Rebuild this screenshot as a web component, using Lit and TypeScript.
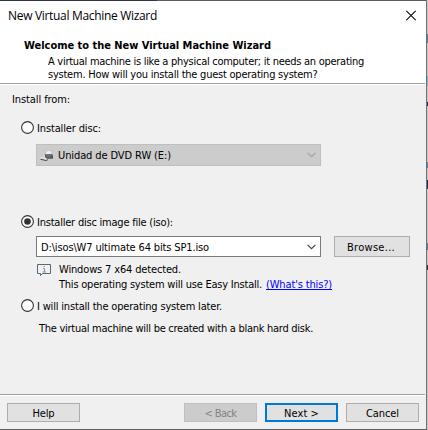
import { LitElement, html, css, svg } from "lit";
import { customElement, property, state } from "lit/decorators.js";
import { styleMap } from "lit/directives/style-map.js";

/** One line of text whose tracking is adjusted so that it fills a given width. */
@customElement("wizard-text")
class WizardText extends LitElement {
  @property() text = "";
  @property({ type: Number }) span = 0;
  @state() private tracking = 0;
  static styles = css`
    :host { display: block; height: 14px; line-height: 16px; white-space: pre; flex: none; }
    .line { display: inline-block; }
  `;
  firstUpdated() {
    const el = this.renderRoot.querySelector(".line") as HTMLElement;
    const natural = el.getBoundingClientRect().width;
    if (this.span && natural) this.tracking = (this.span - natural) / this.text.length;
  }
  render() {
    return html`<span class="line" style=${styleMap({ letterSpacing: this.tracking + "px" })}>${this.text}</span>`;
  }
}

@customElement("wizard-radio")
class WizardRadio extends LitElement {
  @property({ type: Boolean }) checked = false;
  @property() text = "";
  @property({ type: Number }) span = 0;
  static styles = css`
    :host { display: flex; height: 14px; padding-left: 21px; gap: 3px; align-items: flex-start; }
    svg { display: block; flex: none; }
  `;
  render() {
    return html`<svg width="13" height="13" viewBox="0 0 13 13">
        <circle cx="6.5" cy="6.5" r="5.9" fill="#fff" stroke="#333" stroke-width="1.1" />
        ${this.checked ? svg`<circle cx="6.5" cy="6.5" r="3.3" fill="#333" />` : ""}
      </svg>
      <wizard-text .text=${this.text} .span=${this.span}></wizard-text>`;
  }
}

@customElement("app-root")
class AppRoot extends LitElement {
  static styles = css`
    :host {
      display: flex; width: 428px; height: 430px; overflow: hidden; box-sizing: border-box;
      font: 11px "DejaVu Sans Condensed", "DejaVu Sans", sans-serif; font-stretch: condensed;
      color: #000;
    }
    * { box-sizing: border-box; }
    svg { display: block; flex: none; }
    .dialog {
      width: 427px; height: 430px; background: #f0f0f0; display: flex; flex-direction: column;
      border-right: 1px solid #707070; border-bottom: 1px solid #606060;
    }
    .edge { height: 1px; flex: none; background: linear-gradient(90deg, #2d3448 157px, #5c5c5c 157px); }
    .behind { width: 1px; display: flex; flex-direction: column; background: #c9c9c9; }
    .behind i { display: block; height: 9px; background: #4b7fa8; }
    .behind .b1 { margin-top: 34px; }
    .behind .b2 { margin-top: 33px; background: #6fb1d8; height: 10px; }
    .behind .b3 { margin-top: 16px; background: #24345c; height: 4px; }
    .behind .b4 { margin-top: 56px; height: 6px; }
    .behind .b5 { margin-top: 12px; background: #25305e; }
    .behind .b6 { margin-top: 54px; height: 7px; }
    .behind .b7 { margin-top: 15px; height: 5px; background: #333; }
    .head { height: 82px; flex: none; background: #fff; }
    .title {
      height: 28px; padding: 7px 10px 0 8px; display: flex; justify-content: space-between;
      font: 12px "Open Sans", "Noto Sans", sans-serif;
    }
    .title svg { margin-top: 2px; }
    .welcome { margin: 9px 0 0 24px; font-weight: bold; }
    .desc { margin-left: 48px; }
    .desc.first { margin-top: 2px; }
    .desc.second { margin-top: -1px; }
    .rule { height: 2px; flex: none; width: 425px; background: #fff; border-top: 1px solid #a0a0a0; }
    .body { height: 309px; flex: none; }
    .from { margin: 7px 0 15px 12px; }
    .combo { width: 285px; display: flex; align-items: center; border: 1px solid #7a7a7a; background: #fff; padding: 0 4px; flex: none; }
    .combo .arrow { margin-left: auto; }
    .combo.disabled { margin: 9px 0 49px 36px; height: 22px; background: #ccc; border-color: #bfbfbf; padding-left: 3px; }
    .drive { margin: 1px 4px 0 0; }
    .pick { display: flex; gap: 13px; margin: 7px 0 5px 36px; }
    .pick .combo { height: 21px; }
    .button {
      height: 19px; width: 73px; display: flex; align-items: center; justify-content: center;
      background: #e1e1e1; border: 1px solid #adadad; color: #000;
    }
    .button.browse { width: 76px; height: 21px; padding-right: 2px; padding-top: 1px; }
    .note { display: flex; padding-left: 37px; gap: 8px; height: 37px; }
    .note svg { margin-top: 2px; }
    .message { display: flex; margin-top: 1px; gap: 4px; }
    .link { color: #00f; border-bottom: 1px solid #00f; height: 13px; }
    .later { margin: 8px 0 0 39px; }
    .foot { flex: 1; display: flex; padding: 7px 7px 0; gap: 8px; }
    .help { margin-right: auto; }
    .off { background: #ccc; border-color: #bfbfbf; color: #838383; }
    .main { border: 2px solid #0078d7; }
  `;

  private text(text: string, span: number, cls = "") {
    return html`<wizard-text class=${cls} .text=${text} .span=${span}></wizard-text>`;
  }

  private arrow(color: string) {
    return html`<svg class="arrow" width="9" height="6" viewBox="0 0 9 6">
      <path d="M.6.8 4.5 4.7 8.4.8" fill="none" stroke=${color} stroke-width="1.2" /></svg>`;
  }

  render() {
    return html`
      <div class="dialog">
        <div class="edge"></div>
        <div class="head">
          <div class="title">
            ${this.text("New Virtual Machine Wizard", 149)}
            <svg width="10" height="11" viewBox="0 0 10 11">
              <path d="M.3.8 9.7 10.2M9.7.8.3 10.2" stroke="#000" stroke-width="1.1" />
            </svg>
          </div>
          ${this.text("Welcome to the New Virtual Machine Wizard", 247, "welcome")}
          ${this.text("A virtual machine is like a physical computer; it needs an operating", 316, "desc first")}
          ${this.text("system. How will you install the guest operating system?", 269.5, "desc second")}
        </div>
        <div class="rule"></div>
        <div class="body">
          ${this.text("Install from:", 58, "from")}
          <wizard-radio .text=${"Installer disc:"} .span=${64}></wizard-radio>
          <div class="combo disabled">
            <svg class="drive" width="14" height="12" viewBox="0 0 14 12">
              <path d="M5 5 6 1.5 8.5.3 11 .8 12.5 4Z" fill="#eee" stroke="#aaa" stroke-width=".5" />
              <path d="M0 7.5 5 6 8 8 6 10.2 0 9Z" fill="#ddd" />
              <path d="M.5 8.8 6 10 8 9.2V10L6 10.9.5 9.8Z" fill="#444" />
              <path d="M5 4.2h7l1 1v3.6H7L5 7Z" fill="#55595d" />
              <path d="M6 6h5" stroke="#85898c" />
            </svg>
            ${this.text("Unidad de DVD RW (E:)", 113)}
            ${this.arrow("#a4a4a4")}
          </div>
          <wizard-radio checked .text=${"Installer disc image file (iso):"} .span=${136}></wizard-radio>
          <div class="pick">
            <div class="combo">${this.text("D:\\isos\\W7 ultimate 64 bits SP1.iso", 168)}${this.arrow("#444")}</div>
            <div class="button browse">${this.text("Browse...", 48)}</div>
          </div>
          <div class="note">
            <svg width="14" height="13" viewBox="0 0 14 13">
              <path d="M.5.5h13v9H5.5L3.5 11.6V9.5h-3Z" fill="none" stroke="#56677a" />
              <path d="M6 4.5h1.5V8M5.5 8h3.5M6.5 2.5h1.3" fill="none" stroke="#8b929a" />
            </svg>
            <div>
              ${this.text("Windows 7 x64 detected.", 122)}
              <div class="message">
                ${this.text("This operating system will use Easy Install.", 203)}
                ${this.text("(What's this?)", 66, "link")}
              </div>
            </div>
          </div>
          <wizard-radio .text=${"I will install the operating system later."} .span=${185}></wizard-radio>
          ${this.text("The virtual machine will be created with a blank hard disk.", 274, "later")}
        </div>
        <div class="rule"></div>
        <div class="foot">
          <div class="button help">${this.text("Help", 22)}</div>
          <div class="button off">${this.text("< Back", 32)}</div>
          <div class="button main">${this.text("Next >", 35)}</div>
          <div class="button">${this.text("Cancel", 33)}</div>
        </div>
      </div>
      <div class="behind">
        <i class="b1"></i><i class="b2"></i><i class="b3"></i><i class="b4"></i><i class="b5"></i><i class="b6"></i><i class="b7"></i>
      </div>
    `;
  }
}
